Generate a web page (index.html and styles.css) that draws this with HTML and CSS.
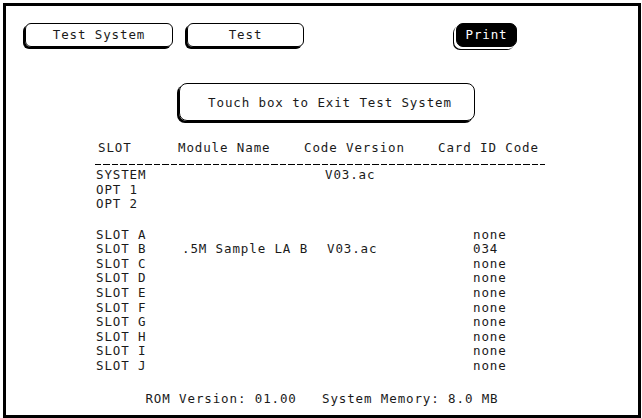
FILE: index.html
```html
<!DOCTYPE html>
<html lang="en">
<head>
    <meta charset="UTF-8">
    <title>Test System</title>
    <link rel="stylesheet" href="styles.css">
</head>
<body>
<div id="screen">
    <div id="bar">
        <div class="btn btn-wide">Test System</div>
        <div class="btn btn-test">Test</div>
        <div class="btn btn-print">Print</div>
    </div>
    <div id="exit">Touch box to Exit Test System</div>
    <div id="head">
        <span>SLOT</span>
        <span>Module Name</span>
        <span>Code Version</span>
        <span>Card ID Code</span>
    </div>
    <div id="rule"></div>
    <div class="group sys">
        <div class="row"><span>SYSTEM</span><span></span><span class="ver">V03.ac</span><span></span></div>
        <div class="row"><span>OPT 1</span><span></span><span></span><span></span></div>
        <div class="row"><span>OPT 2</span><span></span><span></span><span></span></div>
    </div>
    <div class="group slots">
        <div class="row"><span>SLOT A</span><span></span><span></span><span>none</span></div>
        <div class="row"><span>SLOT B</span><span>.5M Sample LA B</span><span>V03.ac</span><span>034</span></div>
        <div class="row"><span>SLOT C</span><span></span><span></span><span>none</span></div>
        <div class="row"><span>SLOT D</span><span></span><span></span><span>none</span></div>
        <div class="row"><span>SLOT E</span><span></span><span></span><span>none</span></div>
        <div class="row"><span>SLOT F</span><span></span><span></span><span>none</span></div>
        <div class="row"><span>SLOT G</span><span></span><span></span><span>none</span></div>
        <div class="row"><span>SLOT H</span><span></span><span></span><span>none</span></div>
        <div class="row"><span>SLOT I</span><span></span><span></span><span>none</span></div>
        <div class="row"><span>SLOT J</span><span></span><span></span><span>none</span></div>
    </div>
    <div id="foot">ROM Version: 01.00   System Memory: 8.0 MB</div>
</div>
</body>
</html>
```

FILE: styles.css
```css
*{
    margin: 0;
    padding: 0;
    box-sizing: border-box;
}
html, body{
    background: #fff;
    overflow: hidden;
}
body{
    font-family: "DejaVu Sans Mono", "Liberation Mono", monospace;
    font-size: 12.5px;
    letter-spacing: 0.88px;
    color: #1a1a1a;
}
#screen{
    margin: 3px 0 0 3px;
    width: 638px;
    height: 415px;
    border: 3px solid #000;
    padding-top: 17px;
}
#bar{
    display: flex;
    padding-left: 19px;
}
.btn{
    height: 24px;
    line-height: 21px;
    text-align: center;
    border: 1px solid #000;
    border-radius: 6px;
    box-shadow: -2px 2px 0 #000;
}
.btn-wide{
    width: 148px;
}
.btn-test{
    width: 117px;
    margin-left: 14px;
}
.btn-print{
    width: 61px;
    margin-left: 152px;
    background: #000;
    color: #fff;
    border-radius: 7px;
    box-shadow: -2px 2px 0 #fff, -3px 3px 0 #000;
}
#exit{
    width: 296px;
    height: 38px;
    margin: 36px 0 0 173px;
    line-height: 37px;
    padding-left: 6px;
    text-align: center;
    border: 1px solid #000;
    border-radius: 8px;
    box-shadow: -2px 2px 0 #000;
}
#head{
    display: grid;
    grid-template-columns: 80px 126px 134px auto;
    margin: 20px 0 0 92px;
    line-height: 14.4px;
}
#rule{
    width: 450px;
    height: 1px;
    margin: 9px 0 0 89px;
    background: repeating-linear-gradient(90deg, #000 0 6.4px, transparent 6.4px 8.4px);
}
.group{
    margin-left: 90px;
    line-height: 14.4px;
}
.sys{
    margin-top: 3px;
}
.slots{
    margin-top: 16px;
}
.row{
    display: grid;
    grid-template-columns: 86px 145px 146px auto;
    height: 14.4px;
}
.slots .row{
    height: 14.6px;
    line-height: 14.6px;
}
.sys .ver{
    margin-left: -2px;
}
#foot{
    margin-top: 18px;
    line-height: 14.4px;
    text-align: center;
    white-space: pre;
}
```
